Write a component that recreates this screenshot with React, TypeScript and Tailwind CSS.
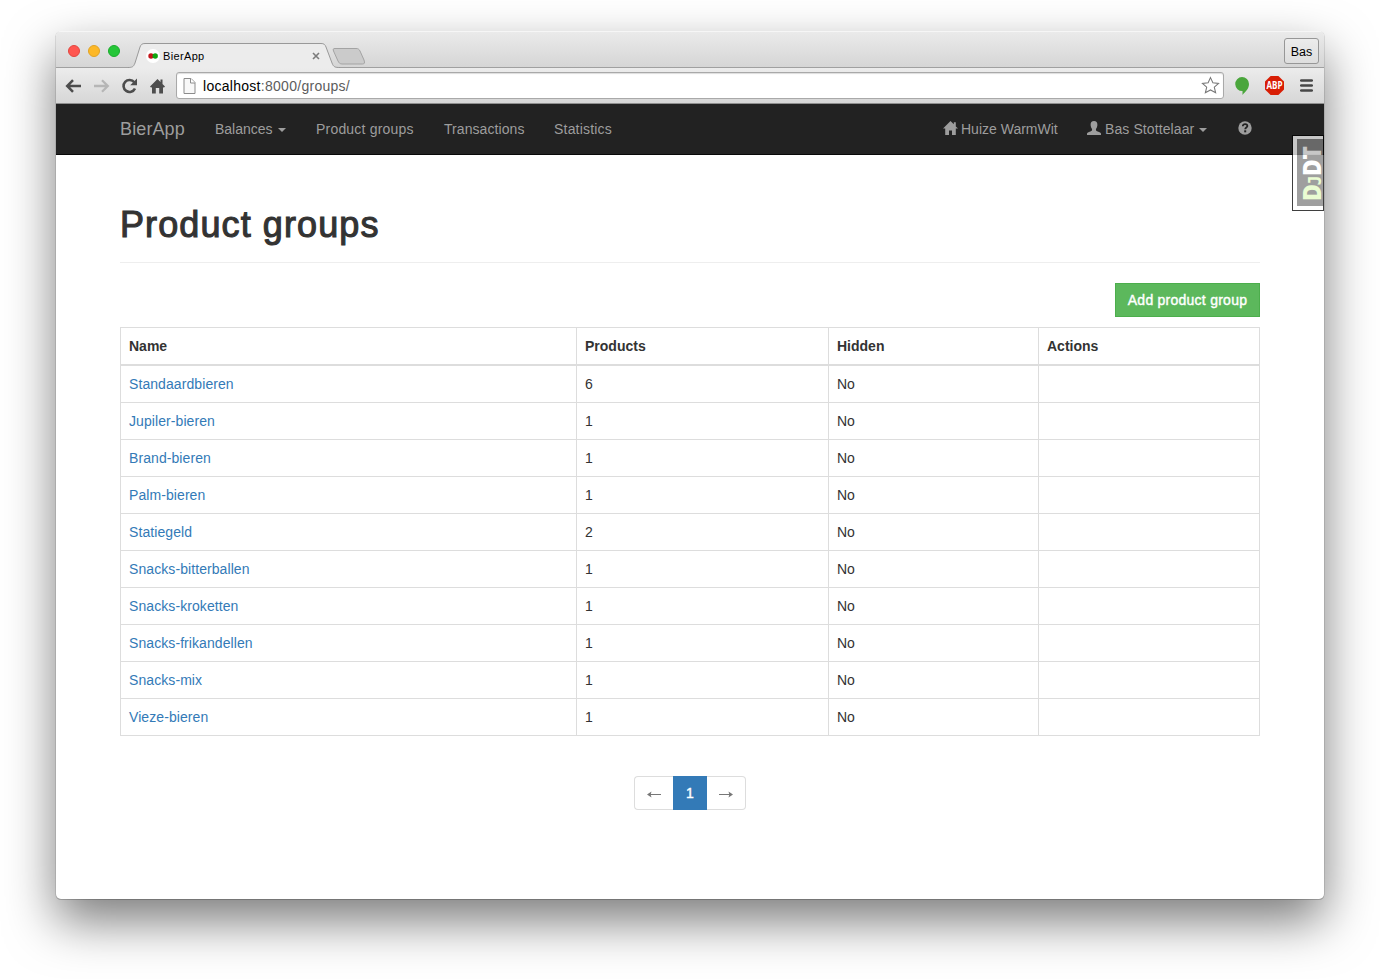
import React from "react";

const rows: [string, number][] = [
  ["Standaardbieren", 6],
  ["Jupiler-bieren", 1],
  ["Brand-bieren", 1],
  ["Palm-bieren", 1],
  ["Statiegeld", 2],
  ["Snacks-bitterballen", 1],
  ["Snacks-kroketten", 1],
  ["Snacks-frikandellen", 1],
  ["Snacks-mix", 1],
  ["Vieze-bieren", 1],
];

function Caret() {
  return <span className="ml-[5px] mt-[2px] h-0 w-0 border-x-4 border-t-4 border-x-transparent border-t-[#9d9d9d]" />;
}

function TitleBar() {
  return (
    <div className="flex h-[37px] items-start bg-linear-to-b from-[#ebebeb] to-[#d5d5d5] shadow-[inset_0_1px_0_#f6f6f6,inset_0_-1px_0_#a0a0a0]">
      <div className="ml-3 mt-[14px] flex gap-2">
        <span className="h-3 w-3 rounded-full border border-[#e2463f] bg-[#ff5650]" />
        <span className="h-3 w-3 rounded-full border border-[#e1a325] bg-[#fdb827]" />
        <span className="h-3 w-3 rounded-full border border-[#1aac2c] bg-[#25c638]" />
      </div>
      <div className="relative ml-2 mt-3 h-[25px] w-[212px]">
        <svg className="absolute inset-0" width="212" height="25" viewBox="0 0 212 25">
          <path d="M0 24.500C4 24.500 5.500 24 7 20L12 4C13 1.500 14 .5 17 .5H193C196 .5 197 1.500 198 4L204 20C205.500 24 207 24.500 212 24.500V26H0Z" fill="#ececec" />
          <path d="M0 24.500C4 24.500 5.500 24 7 20L12 4C13 1.500 14 .5 17 .5H193C196 .5 197 1.500 198 4L204 20C205.500 24 207 24.500 212 24.500" fill="none" stroke="#999" />
        </svg>
        <div className="relative flex h-[25px] items-center">
          <svg className="ml-[18px]" width="14" height="14" viewBox="0 0 14 14">
            <circle cx="7" cy="7" r="7" fill="#fff" />
            <circle cx="5" cy="7" r="2.700" fill="#c4161c" />
            <circle cx="9.200" cy="7" r="2.700" fill="#11a611" />
          </svg>
          <span className="ml-[3px] text-[11px] tracking-[0.350px] text-black">BierApp</span>
          <svg className="ml-[107px]" width="8" height="8" viewBox="0 0 8 8">
            <path d="M1 1L7 7M7 1L1 7" stroke="#7b7b7b" strokeWidth="1.600" />
          </svg>
        </div>
      </div>
      <svg className="-ml-[8px] mt-[17px]" width="34" height="17" viewBox="0 0 34 17">
        <path d="M3 .5H24C26 .5 27 1 28 3L32 12C33 15 32.500 16 30.500 16H10C8 16 7 15 6 13L1.500 3C1 1 1 .5 3 .5Z" fill="#cbcbcb" stroke="#a3a3a3" />
      </svg>
      <div className="ml-auto mr-[5px] mt-[7px] flex h-[26px] w-[35px] items-center justify-center rounded-[3px] border border-[#979797] bg-linear-to-b from-[#ececec] to-[#dedede] pt-px text-[12.500px] text-black">
        Bas
      </div>
    </div>
  );
}

function ToolBar() {
  return (
    <div className="flex h-9 items-center bg-linear-to-b from-[#ececec] to-[#d6d6d6] shadow-[inset_0_-1px_0_#8f8f8f]">
      <svg className="-mt-px ml-[9px]" width="17" height="14" viewBox="0 0 17 14">
        <path d="M16 7H2.500M8 1.200L2.200 7L8 12.800" fill="none" stroke="#4d4d4d" strokeWidth="2.500" />
      </svg>
      <svg className="-mt-px ml-[11px]" width="17" height="14" viewBox="0 0 17 14">
        <path d="M1 7H14.500M9 1.200L14.800 7L9 12.800" fill="none" stroke="#b6b6b6" strokeWidth="2.300" />
      </svg>
      <svg className="-mt-px ml-[11px]" width="17" height="16" viewBox="0 0 17 16">
        <path d="M13.300 4.300A6 6 0 1 0 14 10.500" fill="none" stroke="#4d4d4d" strokeWidth="2.600" />
        <path d="M16 .5V7.300H9.200Z" fill="#4d4d4d" />
      </svg>
      <svg className="-mt-px ml-[12px]" width="15" height="16" viewBox="0 0 15 16">
        <path d="M7.500 1L0 8.500L1.200 9.700L2 9V15.500H5.800V10H9.200V15.500H13V9L13.800 9.700L15 8.500L12.500 6V1.500H10.500V4Z" fill="#4d4d4d" />
      </svg>
      <div className="-mt-px ml-[11px] flex h-[27px] w-[1048px] items-center rounded-[3px] border border-[#a9a9a9] bg-white shadow-[inset_0_1px_1px_#ddd]">
        <svg className="ml-[6px]" width="13" height="16" viewBox="0 0 13 16">
          <path d="M1 .5H8L12 4.500V15.500H1Z" fill="#f8f8f8" stroke="#8c8c8c" />
          <path d="M7.500 .5V5H12" fill="#fff" stroke="#8c8c8c" />
        </svg>
        <span className="ml-[7px] text-[14px] tracking-[0.280px] text-[#5c5c5c]">
          <span className="text-black">localhost</span>:8000/groups/
        </span>
        <svg className="ml-auto mr-[3px]" width="19" height="19" viewBox="0 0 20 19">
          <path d="M10 1.200L12.500 6.700L18.500 7.300L14 11.300L15.400 17.200L10 14.200L4.600 17.200L6 11.300L1.500 7.300L7.500 6.700Z" fill="#fff" stroke="#777" strokeWidth="1.100" />
        </svg>
      </div>
      <svg className="ml-[11px]" width="14" height="18" viewBox="0 0 14 18">
        <path d="M7 0A7 7 0 0 1 14 7C14 12 10 15 7.500 18V14A7 7 0 0 1 7 0Z" fill="#4aa63c" />
      </svg>
      <svg className="-mt-px ml-[16px] overflow-visible" width="19" height="19" viewBox="0 0 19 19">
        <path d="M5.600 0H13.400L19 5.600V13.400L13.400 19H5.600L0 13.400V5.600Z" fill="#d81e05" />
        <text x="1.500" y="13.300" textLength="16" lengthAdjust="spacingAndGlyphs" fontSize="10.500" fontWeight="700" fill="#fff" fontFamily="Open Sans">ABP</text>
      </svg>
      <svg className="-mt-px ml-[16px]" width="13" height="13" viewBox="0 0 13 13">
        <path d="M1.200 1.500H11.800M1.200 6.500H11.800M1.200 11.500H11.800" stroke="#474747" strokeWidth="2.600" strokeLinecap="round" />
      </svg>
    </div>
  );
}

function NavBar() {
  return (
    <nav className="flex h-[51px] items-center border-b border-[#080808] bg-[#222] pl-16 pr-[72px] text-[14px] text-[#9d9d9d]">
      <span className="w-[95px] text-[18px] tracking-[0.120px]">BierApp</span>
      <span className="flex w-[101px] items-center">Balances<Caret /></span>
      <span className="w-[128px] tracking-[0.200px]">Product groups</span>
      <span className="w-[110px] tracking-[0.070px]">Transactions</span>
      <span className="tracking-[0.200px]">Statistics</span>
      <span className="ml-auto flex w-[144px] items-center">
        <svg className="-mt-[2px] mr-[3px]" width="15" height="14" viewBox="0 0 15 14">
          <path d="M7.500 0L0 7.600H2.200V14H6V9.500H9V14H12.800V7.600H15L12.800 5.400V1.200H10.800V3.300Z" fill="#9d9d9d" />
        </svg>
        Huize WarmWit
      </span>
      <span className="flex w-[151px] items-center">
        <svg className="-mt-[2px] mr-[4px]" width="14" height="14" viewBox="0 0 14 14">
          <path d="M7 0C9.300 0 10.500 1.500 10.400 4C10.300 6 9.500 7 9 8C8.800 9.300 9 9.800 10 10.200C12 11 13.500 11.300 14 12.500V14H0V12.500C.5 11.300 2 11 4 10.200C5 9.800 5.200 9.300 5 8C4.500 7 3.700 6 3.600 4C3.500 1.500 4.700 0 7 0Z" fill="#9d9d9d" />
        </svg>
        <span className="tracking-[0.100px]">Bas Stottelaar</span><Caret />
      </span>
      <svg className="-mt-[2px]" width="14" height="14" viewBox="0 0 14 14">
        <circle cx="7" cy="7" r="6.700" fill="#9d9d9d" />
        <path d="M4.800 5.300C4.800 3.700 5.800 3.100 7.100 3.100C8.400 3.100 9.400 3.900 9.400 5.100C9.400 6.500 7.200 6.700 7.200 8.300" fill="none" stroke="#222" strokeWidth="1.800" />
        <rect x="6.200" y="9.300" width="2" height="2" fill="#222" />
      </svg>
    </nav>
  );
}

function DebugHandle() {
  return (
    <div className="absolute right-0 top-[104px] h-[76px] w-8 border border-black bg-white opacity-75">
      <svg className="overflow-visible" width="30" height="74" viewBox="0 0 30 74">
        <rect x="4" y="3" width="26" height="67" fill="#808080" />
        <g transform="translate(28 64) rotate(-90)" fontFamily="Open Sans" fontWeight="800">
          <text x="-1" y="0" fontSize="25" textLength="17" lengthAdjust="spacingAndGlyphs" fill="#e4fcc4">D</text>
          <text x="14.500" y="0" fontSize="18" textLength="10" lengthAdjust="spacingAndGlyphs" fill="#e4fcc4" fontFamily="DejaVu Sans Mono">J</text>
          <text x="24" y="0" fontSize="25" textLength="30" lengthAdjust="spacingAndGlyphs" fill="#fff">DT</text>
        </g>
      </svg>
    </div>
  );
}

export default function App() {
  return (
    <div className="h-[979px] w-[1380px] overflow-hidden bg-white pl-14 pt-[31px] font-['Liberation_Sans',Arial,sans-serif] text-[14px] leading-5 text-[#333]">
      <div className="relative h-[868px] w-[1268px] rounded-[5px] bg-white shadow-[0_0.500px_0_0.500px_rgba(0,0,0,0.2),0_22px_50px_rgba(0,0,0,0.52)]">
        <div className="overflow-hidden rounded-t-[5px]">
          <TitleBar />
          <ToolBar />
          <NavBar />
        </div>
        <main className="mx-16 w-[1140px] pt-[49px]">
          <h1 className="h-[59px] border-b border-[#eee] pt-px text-[36px] leading-[40px] tracking-[1.100px] [-webkit-text-stroke:1.100px_#333]">Product groups</h1>
          <div className="mt-5 flex justify-end">
            <button className="h-[34px] w-[145px] border border-[#4cae4c] bg-[#5cb85c] text-[14px] tracking-[0.250px] text-white [-webkit-text-stroke:0.400px_#fff]">Add product group</button>
          </div>
          <table className="mt-[10px] w-[1140px] table-fixed border-separate border-spacing-0 border-r border-t border-[#ddd]">
            <thead>
              <tr className="h-[38px] text-left">
                <th className="w-[456px] border-b-2 border-l border-[#ddd] px-2 py-0">Name</th>
                <th className="w-[252px] border-b-2 border-l border-[#ddd] px-2 py-0">Products</th>
                <th className="w-[210px] border-b-2 border-l border-[#ddd] px-2 py-0">Hidden</th>
                <th className="border-b-2 border-l border-[#ddd] px-2 py-0">Actions</th>
              </tr>
            </thead>
            <tbody>
              {rows.map(([name, count]) => (
                <tr key={name} className="h-[37px]">
                  <td className="border-b border-l border-[#ddd] px-2 py-0 tracking-[0.080px] text-[#337ab7]">{name}</td>
                  <td className="border-b border-l border-[#ddd] px-2 py-0">{count}</td>
                  <td className="border-b border-l border-[#ddd] px-2 py-0">No</td>
                  <td className="border-b border-l border-[#ddd] px-2 py-0" />
                </tr>
              ))}
            </tbody>
          </table>
          <div className="mt-10 flex justify-center">
            <div className="flex h-[34px] w-[112px] text-[#777]">
              <span className="flex w-[39px] items-center justify-center rounded-l border border-r-0 border-[#ddd] pt-[2px]">
                <svg width="14" height="7" viewBox="0 0 14 7"><path d="M0 3.500L4.500 .6L3.800 2.900H14V4.100H3.800L4.500 6.400Z" fill="#777" /></svg>
              </span>
              <span className="flex w-[34px] items-center justify-center bg-[#337ab7] text-white [-webkit-text-stroke:0.400px_#fff]">1</span>
              <span className="flex w-[39px] items-center justify-center rounded-r border border-l-0 border-[#ddd] pt-[2px]">
                <svg width="14" height="7" viewBox="0 0 14 7"><path d="M14 3.500L9.500 .6L10.200 2.900H0V4.100H10.200L9.500 6.400Z" fill="#777" /></svg>
              </span>
            </div>
          </div>
        </main>
        <DebugHandle />
      </div>
    </div>
  );
}
